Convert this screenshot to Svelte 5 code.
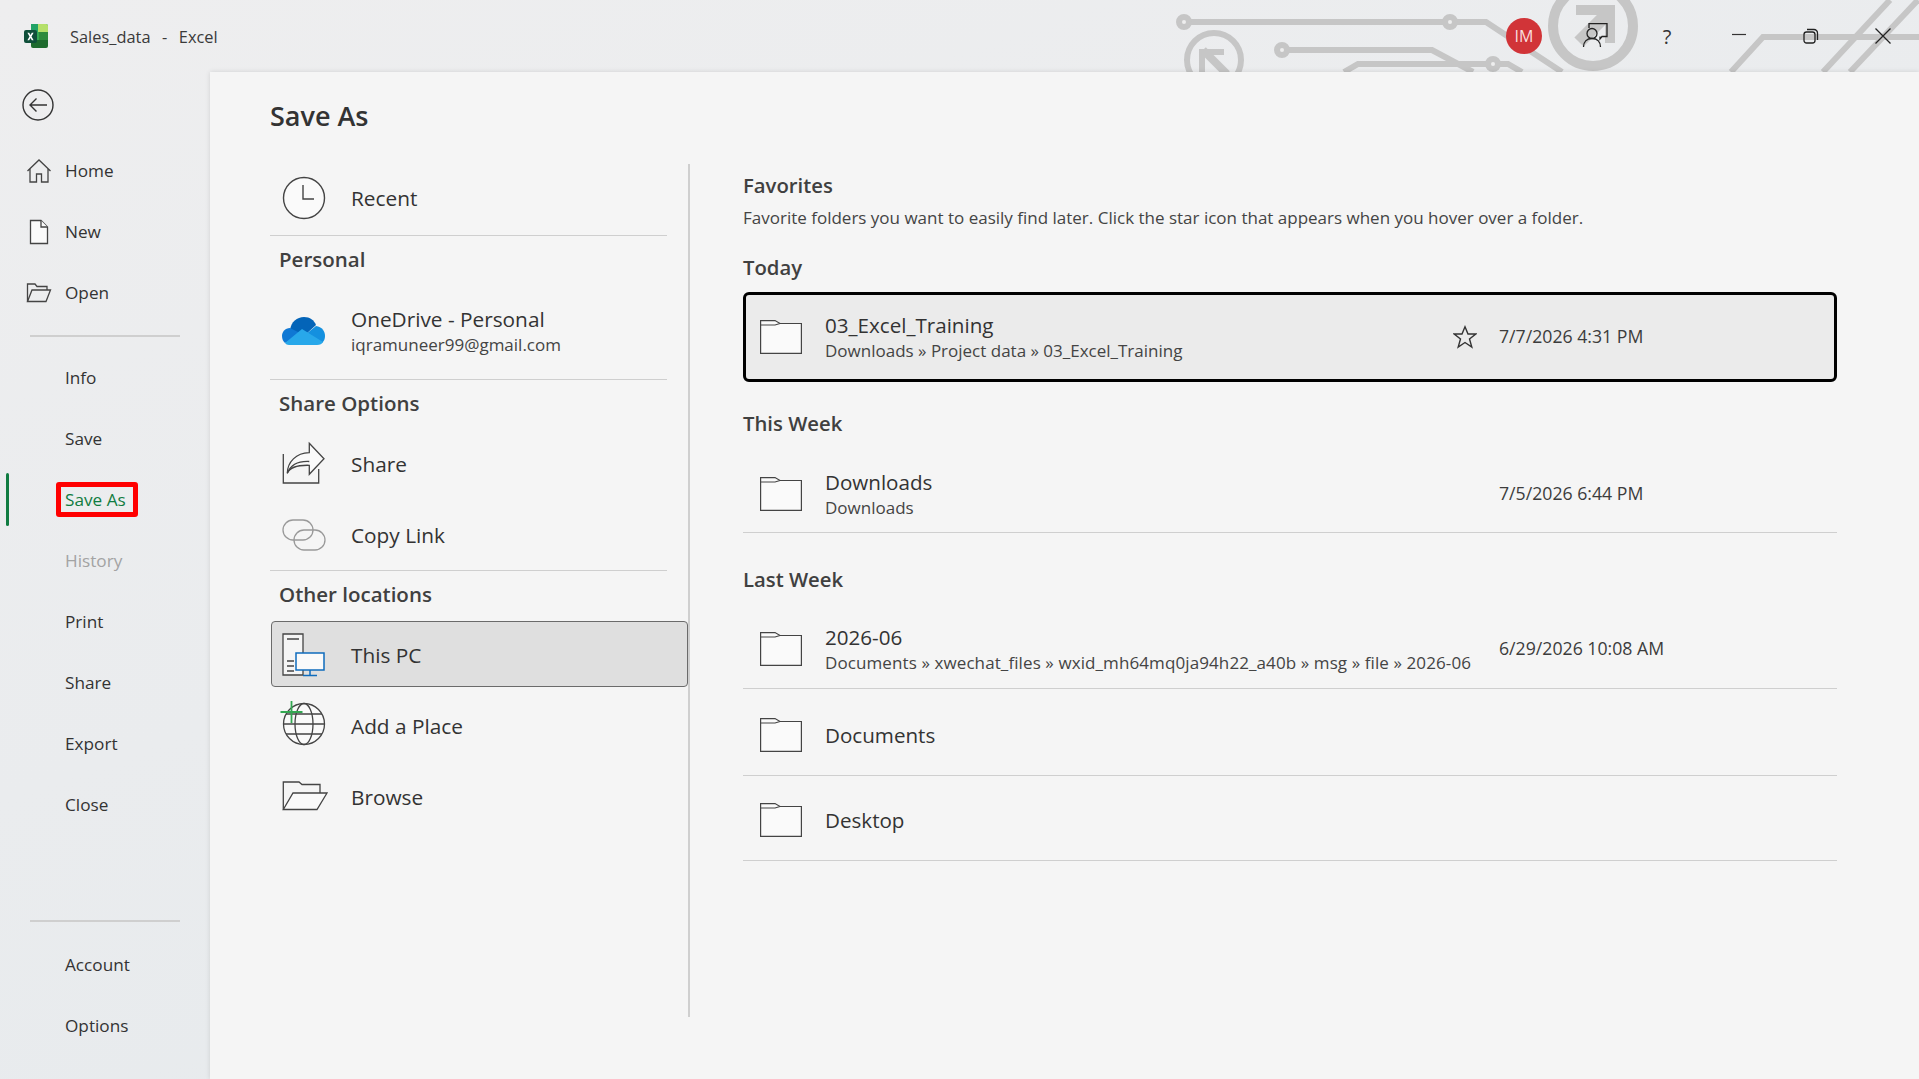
<script>
  const navTop = [
    { label: "Home", icon: "home" },
    { label: "New", icon: "new" },
    { label: "Open", icon: "open" }
  ];
  const navMid = ["Info", "Save", "Save As", "History", "Print", "Share", "Export", "Close"];
  const older = [
    { name: "Documents", cls: "docs" },
    { name: "Desktop", cls: "desk" }
  ];
</script>

<style>
  :global(body) {
    margin: 0;
    background: #eceef0;
  }

  .app {
    position: relative;
    width: 1919px;
    height: 1079px;
    overflow: hidden;
    display: flex;
    flex-direction: column;
    font-family: "Open Sans", "Noto Sans", sans-serif;
    color: #333;
    background: linear-gradient(160deg, #eeeeef 0%, #eaecee 45%, #e4e9ec 100%);
  }

  /* title bar */
  .art {
    position: absolute;
    left: 1150px;
    top: 0;
  }

  .titlebar {
    position: relative;
    flex: none;
    height: 72px;
    display: flex;
    align-items: center;
    padding-left: 24px;
    font-size: 16.4px;
    color: #3a3a3a;
  }

  .doc {
    margin-left: 22px;
    white-space: pre;
    word-spacing: 1.5px;
  }

  .controls {
    margin-left: auto;
    display: flex;
    align-items: center;
  }

  .ctl {
    width: 72px;
    height: 72px;
    display: flex;
    align-items: center;
    justify-content: center;
  }

  .avatar {
    width: 36px;
    height: 36px;
    margin-right: 17px;
    border-radius: 50%;
    background: #d13438;
    color: #f8dede;
    font-size: 16px;
    display: flex;
    align-items: center;
    justify-content: center;
  }

  .help {
    font-size: 20px;
    color: #333;
  }

  /* body */
  .body {
    flex: 1;
    min-height: 0;
    display: flex;
    position: relative;
  }

  .side {
    flex: none;
    width: 210px;
    display: flex;
    flex-direction: column;
    padding-bottom: 23px;
    box-sizing: border-box;
    font-size: 17.2px;
    color: #333;
  }

  .back {
    height: 68px;
    padding: 0 0 2px 22px;
    box-sizing: border-box;
    display: flex;
    align-items: center;
  }

  .nav {
    position: relative;
    flex: none;
    height: 61px;
    display: flex;
    align-items: center;
    padding-left: 65px;
  }

  .nav svg {
    position: absolute;
    left: 26px;
  }

  .nav.on {
    color: #107c41;
  }

  .nav.on::before {
    content: "";
    position: absolute;
    left: 6px;
    top: 4px;
    bottom: 4px;
    width: 3px;
    border-radius: 2px;
    background: #107c41;
  }

  .nav.off {
    color: #a3a3a3;
  }

  .mark {
    height: 35px;
    margin-left: -9px;
    padding: 0 7px 0 4px;
    display: flex;
    align-items: center;
    border: 5px solid #f00;
    border-radius: 3px;
    box-sizing: border-box;
  }

  .rule {
    flex: none;
    width: 150px;
    height: 2px;
    margin: 12px 0 10px 30px;
    background: #cfcfcf;
  }

  .rule.low {
    margin-top: auto;
    margin-bottom: 12px;
  }

  .panel {
    flex: 1;
    background: #f5f5f5;
    box-shadow: 0 0 5px rgba(0, 0, 0, 0.12);
    padding-left: 60px;
  }

  h1 {
    margin: 0;
    height: 92px;
    padding-bottom: 5px;
    box-sizing: border-box;
    display: flex;
    align-items: center;
    font-size: 27px;
    font-weight: 600;
    color: #333;
  }

  .cols {
    display: flex;
  }

  .left {
    flex: none;
    width: 418px;
    height: 853px;
    border-right: 2px solid #cfcfcf;
  }

  .place {
    width: 397px;
    height: 71px;
    display: flex;
    align-items: center;
    font-size: 20.8px;
    color: #333;
  }

  .ic {
    flex: none;
    width: 81px;
    display: flex;
    align-items: center;
    padding-left: 12px;
    box-sizing: border-box;
  }

  .ic svg {
    overflow: visible;
  }

  .place.line {
    border-bottom: 1px solid #cfcfcf;
  }

  .place.top {
    padding-bottom: 3px;
    height: 68px;
  }

  .place.tall {
    height: 98px;
    padding: 4px 0;
    box-sizing: border-box;
  }

  .place.first {
    margin-top: 2px;
  }

  .place.sel {
    box-sizing: border-box;
    width: 417px;
    height: 66px;
    margin: 4px 0 3px 1px;
    padding-top: 2px;
    border: 1px solid #6b6b6b;
    border-radius: 4px;
    background: #dfdfdf;
  }

  .place.sel .ic {
    width: 79px;
    padding-left: 10px;
  }

  .place small,
  .row small {
    display: block;
    font-size: 17px;
    line-height: 24px;
    color: #444;
  }

  .row small.long {
    letter-spacing: 0.1px;
  }

  .name {
    line-height: 28px;
  }

  .sect {
    height: 46px;
    padding-left: 9px;
    display: flex;
    align-items: center;
    font-size: 20.5px;
    font-weight: 600;
    color: #404040;
  }

  .right {
    flex: none;
    width: 1094px;
    margin-left: 53px;
    padding-top: 4px;
  }

  .head {
    height: 34px;
    display: flex;
    align-items: center;
    font-size: 20.3px;
    font-weight: 600;
    color: #404040;
  }

  .desc {
    height: 28px;
    margin: 1px 0 19px;
    display: flex;
    align-items: center;
    font-size: 17px;
    color: #444;
  }

  .row {
    display: grid;
    grid-template-columns: 82px 618px 56px 1fr;
    align-items: center;
    border-bottom: 1px solid #cfcfcf;
    box-sizing: border-box;
    font-size: 20.6px;
    color: #333;
  }

  .row > * {
    white-space: nowrap;
  }

  .row .when {
    padding-bottom: 2px;
    font-size: 17.7px;
    color: #3c3c3c;
  }

  .row svg.folder {
    margin-left: 17px;
  }

  .star {
    margin-left: 10px;
  }

  .today {
    height: 90px;
    margin-top: 8px;
    border-radius: 6px;
    background: #ebebeb;
    outline: 3px solid #000;
    outline-offset: -3px;
  }

  .week {
    height: 86px;
    margin-top: 7px;
    padding-top: 8px;
  }

  .sp-a {
    margin-top: 24px;
  }

  .sp-b {
    margin-top: 29px;
  }

  .dated {
    height: 89px;
    margin-top: 4px;
    padding-top: 10px;
  }

  .docs {
    height: 87px;
    padding-top: 6px;
  }

  .desk {
    height: 85px;
    padding-top: 4px;
  }
</style>

<div class="app">
  <svg class="art" width="769" height="72" viewBox="0 0 769 72" fill="none" stroke="#c6c6c6" stroke-width="6">
    <path d="M34 22H336L412 72" />
    <path d="M132 50H282L323 72" />
    <path d="M194 72L208 64H358L372 72" />
    <circle cx="34" cy="22" r="5" fill="#eee" />
    <circle cx="300" cy="22" r="5" fill="#eee" />
    <circle cx="132" cy="50" r="5" fill="#eee" />
    <circle cx="343" cy="64" r="5" fill="#eee" />
    <circle cx="64" cy="60" r="27" />
    <path d="M49 75V49H74V55H55V75Z" fill="#c6c6c6" stroke-width="0" />
    <path d="M53 50L77 74" stroke-width="8" />
    <circle cx="443" cy="26" r="40" stroke-width="10" />
    <path d="M426 5H465V43H455V15H426Z" fill="#c6c6c6" stroke-width="0" />
    <path d="M458 13L429 42" stroke-width="13" />
    <path d="M581 72L613 37H769" />
    <path d="M673 72L740 0" />
    <path d="M700 72L768 0" />
  </svg>

  <header class="titlebar">
    <svg width="24" height="24" viewBox="0 0 24 24">
      <path d="M7 0H22a2 2 0 0 1 2 2V8H7Z" fill="#21a366" />
      <path d="M14 0H22a2 2 0 0 1 2 2V8H14Z" fill="#b5e06a" />
      <path d="M7 8H15V16H7Z" fill="#33a852" />
      <path d="M15 8H24V16H15Z" fill="#2e8b3d" />
      <path d="M7 16H24V22a2 2 0 0 1-2 2H9a2 2 0 0 1-2-2Z" fill="#1e6b2e" />
      <rect x="0" y="6" width="13" height="13" rx="2" fill="#0f4f3a" />
      <path d="M3.4 8.8H5.2L6.5 11L7.8 8.8H9.6L7.5 12.5L9.6 16.2H7.8L6.5 14L5.2 16.2H3.4L5.5 12.5Z" fill="#fff" />
    </svg>
    <span class="doc">Sales_data  -  Excel</span>
    <div class="controls">
      <div class="avatar">IM</div>
      <div class="ctl">
        <svg width="26" height="26" viewBox="0 0 26 26" fill="none" stroke="#222" stroke-width="1.300">
          <circle cx="10" cy="10.500" r="5" />
          <path d="M1.500 24C1.500 18.500 5 15.500 10 15.500S18.500 18.500 18.500 24" />
          <path d="M7 5V.7H25V13.500H20L18 16V13.500" />
        </svg>
      </div>
      <div class="ctl help">?</div>
      <div class="ctl">
        <svg width="16" height="16" viewBox="0 0 16 16" stroke="#333" stroke-width="1.200"><path d="M1 6.500H15" /></svg>
      </div>
      <div class="ctl">
        <svg width="16" height="16" viewBox="0 0 16 16" fill="none" stroke="#222" stroke-width="1.300">
          <rect x="1" y="4" width="11" height="11" rx="2.500" />
          <path d="M4 1.500H11A3.500 3.500 0 0 1 14.500 5V12" />
        </svg>
      </div>
      <div class="ctl">
        <svg width="16" height="16" viewBox="0 0 16 16" stroke="#222" stroke-width="1.300"><path d="M.5 .5L15.500 15.500M15.500 .5L.5 15.500" /></svg>
      </div>
    </div>
  </header>

  <div class="body">
    <nav class="side">
      <div class="back">
        <svg width="32" height="32" viewBox="0 0 32 32" fill="none" stroke="#333" stroke-width="1.400">
          <circle cx="16" cy="16" r="15" />
          <path d="M25 16H8M14.500 9.500L8 16L14.500 22.500" />
        </svg>
      </div>
      {#each navTop as item}
        <div class="nav">
          {#if item.icon === "home"}
            <svg width="26" height="26" viewBox="0 0 26 26" fill="none" stroke="#444" stroke-width="1.300">
              <path d="M1.500 13L13 2L24.500 13M4 11V24H10.500V16H15.500V24H22V11" />
            </svg>
          {:else if item.icon === "new"}
            <svg width="26" height="26" viewBox="0 0 26 26" fill="#fafafa" stroke="#444" stroke-width="1.300">
              <path d="M4.500 1.500H15L21.500 8V24.500H4.500Z" />
              <path d="M15 1.500V8H21.500" />
            </svg>
          {:else}
            <svg width="26" height="22" viewBox="0 0 26 22" fill="none" stroke="#444" stroke-width="1.300">
              <path d="M1.500 19.500V2H9L11 4.500H21V8" />
              <path d="M1.500 19.500L6 8H24.500L20 19.500Z" />
            </svg>
          {/if}
          {item.label}
        </div>
      {/each}
      <div class="rule"></div>
      {#each navMid as label}
        <div class="nav" class:on={label === "Save As"} class:off={label === "History"}>
          {#if label === "Save As"}
            <span class="mark">{label}</span>
          {:else}
            {label}
          {/if}
        </div>
      {/each}
      <div class="rule low"></div>
      <div class="nav">Account</div>
      <div class="nav">Options</div>
    </nav>

    <main class="panel">
      <h1>Save As</h1>
      <div class="cols">
        <section class="left">
          <div class="place line top">
            <span class="ic">
              <svg width="44" height="44" viewBox="0 0 44 44" fill="#fafafa" stroke="#444" stroke-width="1.400">
                <circle cx="22" cy="22" r="20.500" />
                <path d="M21 9V23H32" fill="none" />
              </svg>
            </span>
            Recent
          </div>
          <div class="sect">Personal</div>
          <div class="place line tall">
            <span class="ic">
              <svg width="44" height="30" viewBox="0 0 44 30">
                <path d="M8 14C9 6 15 1 22 1C28 1 32 4 34 9L22 20Z" fill="#0364b8" />
                <path d="M8 12C3 12 0 16 0 20C0 23 1 25 3 27L20 18Z" fill="#0f78d4" />
                <path d="M34 10C40 11 43 15 43 20C43 23 42 25 40 27L24 18Z" fill="#1490df" />
                <path d="M20 13L41 26C40 28 38 29 35 29H7C5 29 4 28 3 27Z" fill="#28a8ea" />
              </svg>
            </span>
            <div>
              <div class="name">OneDrive - Personal</div>
              <small>iqramuneer99@gmail.com</small>
            </div>
          </div>
          <div class="sect">Share Options</div>
          <div class="place first">
            <span class="ic">
              <svg width="44" height="44" viewBox="0 0 44 44" fill="none" stroke="#444" stroke-width="1.300">
                <path d="M1.300 12V41H36.700V27" />
                <path d="M27.300 1.300L42 16.700L27.300 32.300V23.300C17 23 8 25 5.300 31.300C5.500 20 14 11 27.300 10.700Z" fill="#fafafa" />
                <path d="M5.300 31.300C9 22 17 19 27.300 19.500" />
              </svg>
            </span>
            Share
          </div>
          <div class="place line">
            <span class="ic">
              <svg width="44" height="32" viewBox="0 0 44 32" fill="none" stroke="#999" stroke-width="1.300">
                <rect x="1" y="1" width="30" height="20" rx="10" />
                <rect x="12" y="11" width="31" height="20" rx="10" />
              </svg>
            </span>
            Copy Link
          </div>
          <div class="sect">Other locations</div>
          <div class="place sel">
            <span class="ic">
              <svg width="44" height="44" viewBox="0 0 44 44" fill="none">
                <path d="M1 1H21V42H1Z" fill="#f5f5f5" stroke="#444" stroke-width="1.300" />
                <path d="M5 6H17M5 28H12M5 33H12M5 38H12" stroke="#444" stroke-width="1.300" />
                <path d="M14 20H42V37H14Z" fill="#fafafa" stroke="#0f6cbd" stroke-width="1.500" />
                <path d="M28 37V42M21 42.500H35" stroke="#0f6cbd" stroke-width="1.500" />
              </svg>
            </span>
            This PC
          </div>
          <div class="place">
            <span class="ic">
              <svg width="44" height="48" viewBox="0 0 44 48" fill="none" stroke="#444" stroke-width="1.300">
                <circle cx="22" cy="22" r="20.500" fill="#fafafa" />
                <ellipse cx="22" cy="22" rx="9" ry="20.500" />
                <path d="M1.500 22H42.500M4 12H40M4 32H40" />
                <path d="M9.500 -1V21M-1.500 10H20.500" stroke="#33a852" stroke-width="1.800" />
              </svg>
            </span>
            Add a Place
          </div>
          <div class="place">
            <span class="ic">
              <svg width="46" height="32" viewBox="0 0 46 32" fill="none" stroke="#444" stroke-width="1.300">
                <path d="M1.300 28.500V1H17L20 3.500H38V12" />
                <path d="M1.300 28.500L11 12H45L35 28.500Z" fill="#fafafa" />
              </svg>
            </span>
            Browse
          </div>
        </section>

        <section class="right">
          <div class="head">Favorites</div>
          <div class="desc">Favorite folders you want to easily find later. Click the star icon that appears when you hover over a folder.</div>
          <div class="head">Today</div>
          <div class="row today">
            <svg class="folder" width="42" height="34" viewBox="0 0 42 34" fill="#fafafa" stroke="#444" stroke-width="1.200"><path d="M.6 .6H15L20 3.500H41.400V33.400H.6Z" /><path d="M.6 5H15L20 3.500" /></svg>
            <div>
              <div class="name">03_Excel_Training</div>
              <small>Downloads » Project data » 03_Excel_Training</small>
            </div>
            <svg class="star" width="24" height="24" viewBox="0 0 24 24" fill="none" stroke="#333" stroke-width="1.400"><path d="M12 1.800L15 9H22.800L16.500 14L18.800 22L12 17.500L5.200 22L7.500 14L1.200 9H9Z" /></svg>
            <div class="when">7/7/2026 4:31 PM</div>
          </div>
          <div class="head sp-a">This Week</div>
          <div class="row week">
            <svg class="folder" width="42" height="34" viewBox="0 0 42 34" fill="#fafafa" stroke="#444" stroke-width="1.200"><path d="M.6 .6H15L20 3.500H41.400V33.400H.6Z" /><path d="M.6 5H15L20 3.500" /></svg>
            <div>
              <div class="name">Downloads</div>
              <small>Downloads</small>
            </div>
            <span></span>
            <div class="when">7/5/2026 6:44 PM</div>
          </div>
          <div class="head sp-b">Last Week</div>
          <div class="row dated">
            <svg class="folder" width="42" height="34" viewBox="0 0 42 34" fill="#fafafa" stroke="#444" stroke-width="1.200"><path d="M.6 .6H15L20 3.500H41.400V33.400H.6Z" /><path d="M.6 5H15L20 3.500" /></svg>
            <div>
              <div class="name">2026-06</div>
              <small class="long">Documents » xwechat_files » wxid_mh64mq0ja94h22_a40b » msg » file » 2026-06</small>
            </div>
            <span></span>
            <div class="when">6/29/2026 10:08 AM</div>
          </div>
          {#each older as f}
            <div class="row {f.cls}">
              <svg class="folder" width="42" height="34" viewBox="0 0 42 34" fill="#fafafa" stroke="#444" stroke-width="1.200"><path d="M.6 .6H15L20 3.500H41.400V33.400H.6Z" /><path d="M.6 5H15L20 3.500" /></svg>
              <div class="name">{f.name}</div>
            </div>
          {/each}
        </section>
      </div>
    </main>
  </div>
</div>
